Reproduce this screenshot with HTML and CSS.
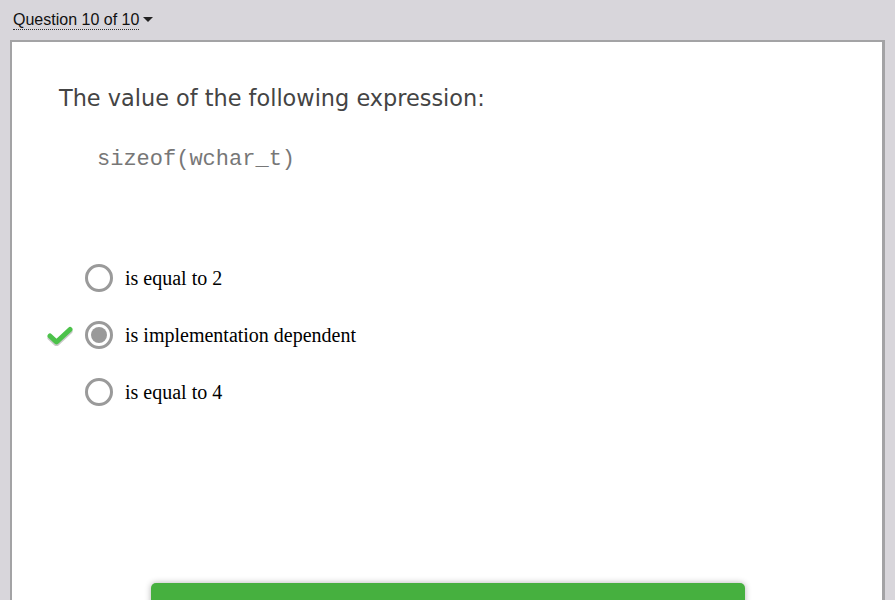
FILE: index.html
```html
<!DOCTYPE html>
<html>
<head>
<meta charset="utf-8">
<link rel="stylesheet" href="styles.css">
</head>
<body>
<div class="topbar">
  <span class="qnum">Question 10 of 10</span><span class="caret"></span>
</div>
<div class="card">
  <h1 class="title">The value of the following expression:</h1>
  <pre class="code">sizeof(wchar_t)</pre>
  <ul class="options">
    <li class="option"><span class="mark"></span><span class="radio"></span><span class="label">is equal to 2</span></li>
    <li class="option"><span class="mark"><svg width="26" height="22" viewBox="0 0 26 22"><path d="M3 12.5 L9.5 18.5 L23 6" fill="none" stroke="#c8c8c8" stroke-width="5" stroke-linejoin="round" stroke-linecap="round" transform="translate(0,1.5)"/><path d="M3 12 L9.5 18 L23 5.5" fill="none" stroke="#4cc24a" stroke-width="5" stroke-linejoin="round" stroke-linecap="round"/></svg></span><span class="radio checked"></span><span class="label">is implementation dependent</span></li>
    <li class="option"><span class="mark"></span><span class="radio"></span><span class="label">is equal to 4</span></li>
  </ul>
  <div class="actions"><button class="submit"></button></div>
</div>
</body>
</html>
```
FILE: styles.css
```css
html, body {
  margin: 0;
  padding: 0;
  background: #d8d6db;
  overflow: hidden;
  height: 600px;
}
.topbar {
  height: 40px;
  padding: 10px 0 0 13px;
  box-sizing: border-box;
  font-family: "Liberation Sans", Arial, sans-serif;
  font-size: 16px;
  color: #111;
  display: flex;
  align-items: flex-start;
}
.qnum {
  line-height: 20px;
  border-bottom: 1px dotted #333;
  height: 19px;
}
.caret {
  width: 0;
  height: 0;
  border-left: 5px solid transparent;
  border-right: 5px solid transparent;
  border-top: 5px solid #222;
  margin: 7px 0 0 4px;
}
.card {
  margin-left: 10px;
  width: 875px;
  height: 560px;
  overflow: hidden;
  box-sizing: border-box;
  background: #fff;
  border: 2px solid #a3a3a5;
  border-bottom: none;
  border-right-width: 3px;
  padding: 42px 0 0 47px;
}
.title {
  margin: 0;
  font-family: "DejaVu Sans", Verdana, sans-serif;
  font-weight: normal;
  font-size: 22.4px;
  line-height: 28px;
  color: #444;
}
.code {
  margin: 35px 0 0 38px;
  font-family: "Liberation Mono", "Courier New", monospace;
  font-size: 22px;
  line-height: 26px;
  color: #777;
}
.options {
  list-style: none;
  margin: 90px 0 0 0;
  padding: 0;
  display: flex;
  flex-direction: column;
  gap: 27px;
}
.option {
  display: flex;
  align-items: center;
  height: 30px;
  font-family: "Liberation Serif", "Times New Roman", serif;
  font-size: 20px;
  color: #000;
}
.mark {
  width: 26px;
  height: 22px;
  margin-left: -12px;
  margin-right: 12px;
  display: flex;
}
.radio {
  width: 28px;
  height: 28px;
  box-sizing: border-box;
  border: 3px solid #9a9a9a;
  border-radius: 50%;
  background: #fff;
  display: flex;
  align-items: center;
  justify-content: center;
  margin-right: 12px;
}
.radio.checked::after {
  content: "";
  width: 16px;
  height: 16px;
  border-radius: 50%;
  background: #9a9a9a;
}
.actions {
  margin-top: 176px;
  padding-left: 92px;
}
.submit {
  display: block;
  width: 594px;
  height: 50px;
  border: none;
  border-radius: 5px;
  background: #46b03f;
  box-shadow: 0 0 6px rgba(0,0,0,0.3);
}
```
